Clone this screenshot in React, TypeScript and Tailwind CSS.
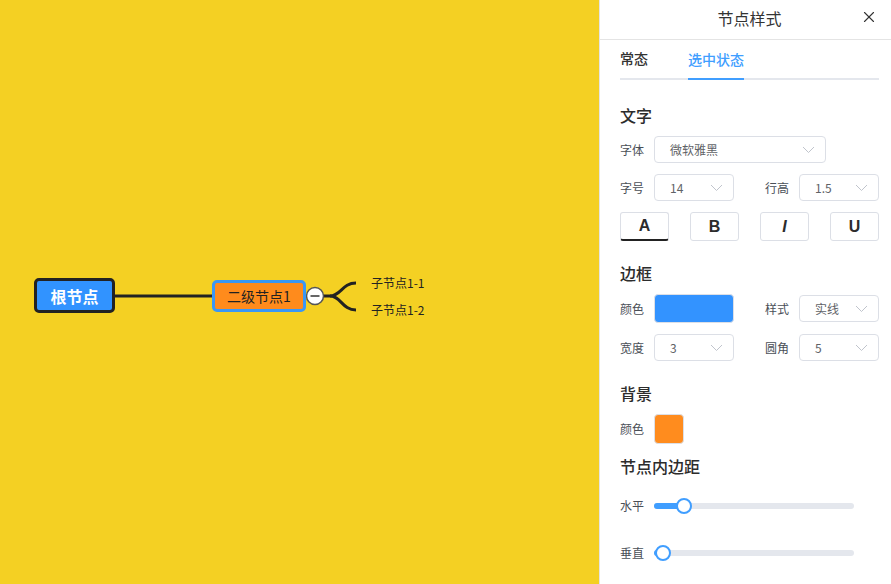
import { X } from "lucide-react";

const font = { fontFamily: '"Noto Sans CJK SC", "Noto Sans", sans-serif' };

function Chevron() {
    return (
        <svg width="13" height="8" viewBox="0 0 13 8" className="shrink-0">
            <path d="M1 1 L6.5 6.5 L12 1" fill="none" stroke="#c0c4cc" strokeWidth="1" />
        </svg>
    );
}

function Select({ value, className }: { value: string; className: string }) {
    return (
        <div className={`h-[27px] border border-[#dcdfe6] rounded-[4px] bg-white flex items-center justify-between pl-[15px] pr-[10px] text-[12px] text-[#606266] ${className}`}>
            <span>{value}</span>
            <Chevron />
        </div>
    );
}

function Label({ text, className = "" }: { text: string; className?: string }) {
    return <span className={`text-[12px] text-[#4a4f57] w-[34px] shrink-0 ${className}`}>{text}</span>;
}

function Title({ text, className = "" }: { text: string; className?: string }) {
    return <div className={`text-[16px] leading-[24px] font-medium text-[#2c2c2c] ${className}`}>{text}</div>;
}

function Slider({ pos }: { pos: number }) {
    return (
        <div className="relative w-[200px] h-[16px] flex items-center">
            <div className="w-full h-[6px] rounded-full bg-[#e4e7ed]" />
            <div className="absolute left-0 h-[6px] rounded-full bg-[#409eff]" style={{ width: pos }} />
            <div className="absolute w-[16px] h-[16px] rounded-full bg-white border-2 border-[#409eff]" style={{ left: pos - 8 }} />
        </div>
    );
}

const styleButtons = [
    { t: "A", cls: "border-b-2 border-b-[#222]" },
    { t: "B", cls: "" },
    { t: "I", cls: "italic" },
    { t: "U", cls: "" },
];

export default function App() {
    return (
        <div className="w-[891px] h-[584px] flex overflow-hidden" style={font}>
            {/* canvas */}
            <div className="relative w-[599px] h-full bg-[#f4d023]">
                <svg className="absolute inset-0" width="599" height="584">
                    <line x1="114" y1="296" x2="213" y2="296" stroke="#222" strokeWidth="3" />
                    <path d="M323 296 L330 296 C341 296 342 283 356 283" fill="none" stroke="#222" strokeWidth="3" />
                    <path d="M330 296 C341 296 342 310 356 310" fill="none" stroke="#222" strokeWidth="3" />
                    <circle cx="315" cy="296" r="8.5" fill="#fff" stroke="#555" strokeWidth="1.5" />
                    <line x1="310.5" y1="296" x2="319.5" y2="296" stroke="#333" strokeWidth="1.5" />
                </svg>
                <div className="absolute left-[34px] top-[278px] w-[81px] h-[35px] rounded-[5px] border-[3px] border-[#222] bg-[#3193ff] flex items-center justify-center text-white text-[16px] font-bold">
                    根节点
                </div>
                <div className="absolute left-[212px] top-[280px] w-[94px] h-[32px] rounded-[5px] border-[3px] border-[#3a97f5] bg-[#ff8b1c] flex items-center justify-center text-[#222] text-[14px]">
                    二级节点1
                </div>
                <div className="absolute left-[371px] top-[274px] text-[12px] leading-[18px] text-[#222]">子节点1-1</div>
                <div className="absolute left-[371px] top-[301px] text-[12px] leading-[18px] text-[#222]">子节点1-2</div>
            </div>

            {/* panel */}
            <div className="w-[292px] h-full bg-white border-l border-[#e4e4e4] flex flex-col">
                <div className="relative h-[40px] border-b border-[#e4e4e4] flex items-center justify-center pl-[8px] pb-[4px] text-[16px] text-[#333]">
                    节点样式
                    <X className="absolute right-[13px] top-[8px] w-[18px] h-[18px] text-[#333]" strokeWidth={1.5} />
                </div>
                <div className="pl-[20px] pr-[12px]">
                    <div className="h-[40px] flex items-end border-b-2 border-[#e4e7ed] gap-[40px] text-[14px]">
                        <div className="pb-[9px] text-[#333] font-medium">常态</div>
                        <div className="pb-[8px] text-[#409eff] font-medium border-b-2 border-[#409eff] -mb-[2px]">选中状态</div>
                    </div>

                    <Title text="文字" className="mt-[23px]" />
                    <div className="mt-[9px] flex items-center">
                        <Label text="字体" />
                        <Select value="微软雅黑" className="w-[172px]" />
                    </div>
                    <div className="mt-[11px] flex items-center">
                        <Label text="字号" />
                        <Select value="14" className="w-[80px]" />
                        <Label text="行高" className="ml-[31px]" />
                        <Select value="1.5" className="w-[80px]" />
                    </div>
                    <div className="mt-[11px] flex justify-between">
                        {styleButtons.map((b) => (
                            <div
                                key={b.t}
                                className={`w-[49px] h-[29px] border border-[#dcdfe6] rounded-[3px] flex items-center justify-center text-[16px] font-bold text-[#2c2c2c] ${b.cls}`}
                                style={{ fontFamily: '"Liberation Sans", Arial, sans-serif' }}
                            >
                                {b.t}
                            </div>
                        ))}
                    </div>

                    <Title text="边框" className="mt-[20px]" />
                    <div className="mt-[9px] flex items-center">
                        <Label text="颜色" />
                        <div className="w-[80px] h-[29px] rounded-[4px] bg-[#3393ff] border border-[#dcdfe6]" />
                        <Label text="样式" className="ml-[31px]" />
                        <Select value="实线" className="w-[80px]" />
                    </div>
                    <div className="mt-[11px] flex items-center">
                        <Label text="宽度" />
                        <Select value="3" className="w-[80px]" />
                        <Label text="圆角" className="ml-[31px]" />
                        <Select value="5" className="w-[80px]" />
                    </div>

                    <Title text="背景" className="mt-[20px]" />
                    <div className="mt-[9px] flex items-center">
                        <Label text="颜色" />
                        <div className="w-[30px] h-[30px] rounded-[4px] bg-[#ff8c1e] border border-[#dcdfe6]" />
                    </div>

                    <Title text="节点内边距" className="mt-[10px]" />
                    <div className="mt-[19px] flex items-center">
                        <Label text="水平" />
                        <Slider pos={30} />
                    </div>
                    <div className="mt-[29px] flex items-center">
                        <Label text="垂直" />
                        <Slider pos={9} />
                    </div>
                </div>
            </div>
        </div>
    );
}
